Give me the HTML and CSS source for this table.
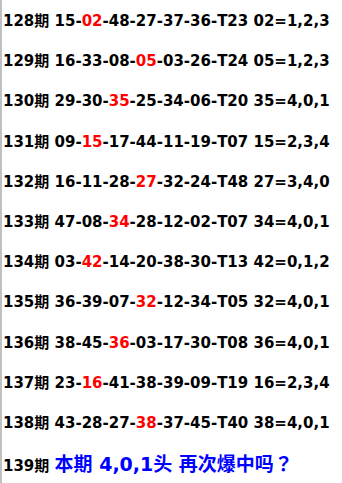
FILE: index.html
```html
<!DOCTYPE html>
<html>
<head>
<meta charset="utf-8">
<link rel="stylesheet" href="styles.css">
</head>
<body>
<div class="page">
  <div class="row">128期 15-<span class="hit">02</span>-48-27-37-36-T23 02=1,2,3</div>
  <div class="row">129期 16-33-08-<span class="hit">05</span>-03-26-T24 05=1,2,3</div>
  <div class="row">130期 29-30-<span class="hit">35</span>-25-34-06-T20 35=4,0,1</div>
  <div class="row">131期 09-<span class="hit">15</span>-17-44-11-19-T07 15=2,3,4</div>
  <div class="row">132期 16-11-28-<span class="hit">27</span>-32-24-T48 27=3,4,0</div>
  <div class="row">133期 47-08-<span class="hit">34</span>-28-12-02-T07 34=4,0,1</div>
  <div class="row">134期 03-<span class="hit">42</span>-14-20-38-30-T13 42=0,1,2</div>
  <div class="row">135期 36-39-07-<span class="hit">32</span>-12-34-T05 32=4,0,1</div>
  <div class="row">136期 38-45-<span class="hit">36</span>-03-17-30-T08 36=4,0,1</div>
  <div class="row">137期 23-<span class="hit">16</span>-41-38-39-09-T19 16=2,3,4</div>
  <div class="row">138期 43-28-27-<span class="hit">38</span>-37-45-T40 38=4,0,1</div>
  <div class="row">139期 <span class="promo">本期 4,0,1头 再次爆中吗<span class="qmark">？</span></span></div>
</div>
</body>
</html>
```

FILE: styles.css
```css
html, body {
  margin: 0;
  padding: 0;
  background: #ffffff;
}
.page {
  border-left: 2px solid #c0c0c0;
  min-height: 483px;
  box-sizing: border-box;
  padding-top: 6px;
  padding-left: 1px;
  font-family: "DejaVu Sans", "Noto Sans CJK SC", sans-serif;
  font-weight: bold;
  font-size: 15px;
  color: #000000;
}
.row {
  height: 40.2px;
  line-height: 30px;
  white-space: nowrap;
}
.hit {
  color: #ff0000;
}
.promo {
  color: #0000ff;
  font-size: 19px;
}
.qmark {
  font-family: "Noto Sans CJK JP", sans-serif;
}
```
